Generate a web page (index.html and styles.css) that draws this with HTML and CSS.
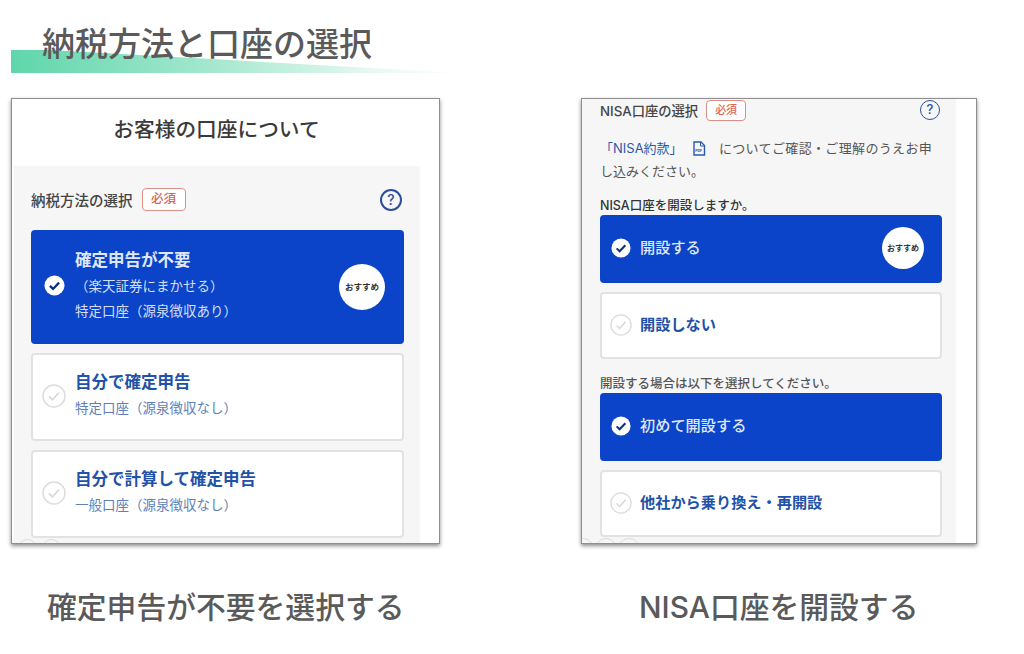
FILE: index.html
```html
<!DOCTYPE html>
<html lang="ja">
<head>
  <meta charset="UTF-8" />
  <meta name="viewport" content="width=device-width, initial-scale=1.0"/>
  <title>納税方法と口座の選択</title>
  <link rel="stylesheet" href="styles.css">
</head>
<body>
  <header class="slide-head">
    <div class="slide-band"></div>
    <h1>納税方法と口座の選択</h1>
  </header>

  <div class="panels">
    <div class="shot shot-left">
      <h2>お客様の口座について</h2>
      <div class="section">
        <div class="section-head">
          <span class="section-title">納税方法の選択</span>
          <span class="required">必須</span>
          <span class="help">?</span>
        </div>

        <div class="card card-on card-tax-main">
          <svg class="check check-on" viewBox="0 0 22 22"><circle cx="11" cy="11" r="10.5" fill="#fff"/><path d="M6.2 11.4l3.300 3.200 6.300-6.600" fill="none" stroke="#0b2f86" stroke-width="2.400"/></svg>
          <div class="card-text">
            <div class="card-title">確定申告が不要</div>
            <div class="card-sub card-sub-indent">（楽天証券にまかせる）</div>
            <div class="card-sub">特定口座（源泉徴収あり）</div>
          </div>
          <span class="recommend">おすすめ</span>
        </div>

        <div class="card card-tax">
          <svg class="check" viewBox="0 0 24 24"><circle cx="12" cy="12" r="11" fill="#fff" stroke="#dcdcdc" stroke-width="1.500"/><path d="M7 12.400l3.400 3.400 6.800-7.400" fill="none" stroke="#d6d6d6" stroke-width="1.500"/></svg>
          <div class="card-text">
            <div class="card-title">自分で確定申告</div>
            <div class="card-sub">特定口座（源泉徴収なし）</div>
          </div>
        </div>

        <div class="card card-tax">
          <svg class="check" viewBox="0 0 24 24"><circle cx="12" cy="12" r="11" fill="#fff" stroke="#dcdcdc" stroke-width="1.500"/><path d="M7 12.400l3.400 3.400 6.800-7.400" fill="none" stroke="#d6d6d6" stroke-width="1.500"/></svg>
          <div class="card-text">
            <div class="card-title">自分で計算して確定申告</div>
            <div class="card-sub">一般口座（源泉徴収なし）</div>
          </div>
        </div>

        <div class="peek">
          <span></span><span></span>
        </div>
      </div>
    </div>

    <div class="shot shot-right">
      <div class="section">
        <div class="section-head">
          <span class="section-title">NISA口座の選択</span>
          <span class="required">必須</span>
          <span class="help">?</span>
        </div>
        <div class="note">
          <div class="note-line">
            <a class="note-link">「NISA約款」</a>
            <svg class="pdf" viewBox="0 0 14 15"><path d="M2 1h7l3.500 3.500V14H2z" fill="none" stroke="#2a5aa8" stroke-width="1.400"/><path d="M8.500 1v4h4" fill="none" stroke="#2a5aa8" stroke-width="1"/><text x="3.300" y="11" class="pdf-label">PDF</text></svg>
            <span class="note-rest">についてご確認・ご理解のうえお申</span>
          </div>
          <div class="note-line">し込みください。</div>
        </div>

        <div class="question">NISA口座を開設しますか。</div>
        <div class="card card-on card-nisa">
          <svg class="check-small check-on" viewBox="0 0 22 22"><circle cx="11" cy="11" r="10.500" fill="#fff"/><path d="M6.200 11.400l3.300 3.200 6.300-6.600" fill="none" stroke="#0b2f86" stroke-width="2.200"/></svg>
          <div class="card-title">開設する</div>
          <span class="recommend recommend-small">おすすめ</span>
        </div>
        <div class="card card-nisa">
          <svg class="check-small" viewBox="0 0 24 24"><circle cx="12" cy="12" r="11" fill="#fff" stroke="#dcdcdc" stroke-width="1.500"/><path d="M7 12.400l3.400 3.400 6.800-7.400" fill="none" stroke="#d6d6d6" stroke-width="1.500"/></svg>
          <div class="card-title">開設しない</div>
        </div>

        <div class="question question-second">開設する場合は以下を選択してください。</div>
        <div class="card card-on card-nisa">
          <svg class="check-small check-on" viewBox="0 0 22 22"><circle cx="11" cy="11" r="10.500" fill="#fff"/><path d="M6.200 11.400l3.300 3.200 6.300-6.600" fill="none" stroke="#0b2f86" stroke-width="2.200"/></svg>
          <div class="card-title">初めて開設する</div>
        </div>
        <div class="card card-nisa">
          <svg class="check-small" viewBox="0 0 24 24"><circle cx="12" cy="12" r="11" fill="#fff" stroke="#dcdcdc" stroke-width="1.500"/><path d="M7 12.400l3.400 3.400 6.800-7.400" fill="none" stroke="#d6d6d6" stroke-width="1.500"/></svg>
          <div class="card-title">他社から乗り換え・再開設</div>
        </div>

        <div class="peek">
          <span></span><span></span><span></span>
        </div>
      </div>
    </div>
  </div>

  <div class="captions">
    <div class="caption caption-left">確定申告が不要を選択する</div>
    <div class="caption caption-right">NISA口座を開設する</div>
  </div>
</body>
</html>
```

FILE: styles.css
```css
* {
  box-sizing: border-box;
}

body {
  font-family: Inter, "Noto Sans CJK JP", sans-serif;
  background: #fff;
  margin: 0;
  width: 1024px;
  height: 654px;
  overflow: hidden;
}

/* slide title with the green swoosh behind it */
.slide-head {
  position: relative;
  height: 98px;
  padding: 21px 0 0 42px;
}

.slide-head h1 {
  position: relative;
  margin: 0;
  font-size: 33px;
  line-height: 46px;
  font-weight: 500;
  color: #5a5a5a;
}

.slide-band {
  position: absolute;
  left: 11px;
  top: 50px;
  width: 450px;
  height: 23px;
  background: linear-gradient(90deg, #5fd6ab 0%, #a5e8cf 45%, #e6f8f1 80%, #fff 100%);
  clip-path: polygon(0 0, 38px 0, 100% 100%, 0 100%);
}

.panels {
  display: flex;
  gap: 141px;
  padding-left: 11px;
}

.shot {
  height: 446px;
  background: #fff;
  overflow: hidden;
  border: 1px solid #8e8e8e;
  box-shadow: 0 2px 4px rgba(0, 0, 0, 0.45);
}

.shot-left {
  width: 429px;
}

.shot-right {
  width: 396px;
}

.shot h2 {
  margin: 0;
  width: 409px;
  height: 67px;
  padding-top: 16px;
  text-align: center;
  font-size: 20.700px;
  line-height: 30px;
  font-weight: 500;
  color: #3a3a3a;
}

.section {
  background: #f6f6f7;
  height: 100%;
}

.shot-left .section {
  width: 406px;
  margin-left: 2px;
  padding: 20px 16px 0 17px;
}

.shot-right .section {
  width: 374px;
  padding: 0 14px 0 18px;
}

.section-head {
  display: flex;
  align-items: center;
  height: 28px;
  margin-bottom: 16px;
}

.shot-right .section-head {
  height: 22px;
  margin-bottom: 0;
}

.section-title {
  font-size: 14.500px;
  font-weight: 500;
  color: #444;
  margin-bottom: 2px;
}

.shot-right .section-title {
  font-size: 13.300px;
  margin-bottom: 0;
}

.required {
  margin-left: 9px;
  margin-bottom: 1px;
  width: 44px;
  height: 23px;
  border: 1px solid #dc8f86;
  border-radius: 4px;
  background: #fff;
  color: #d9665a;
  font-size: 12.500px;
  font-weight: 500;
  line-height: 20px;
  text-align: center;
}

.shot-right .required {
  width: 40px;
  height: 21px;
  margin-left: 8px;
  margin-bottom: 0;
  line-height: 18px;
  font-size: 11px;
}

.help {
  margin-left: auto;
  margin-right: 2px;
  width: 22px;
  height: 22px;
  border: 2px solid #2b4f9e;
  border-radius: 50%;
  color: #2b4f9e;
  font-size: 14px;
  font-weight: 500;
  line-height: 18px;
  text-align: center;
}

.shot-right .help {
  width: 20px;
  height: 20px;
  border-width: 1.500px;
  line-height: 17px;
  margin-right: 2px;
  font-size: 13px;
}

.card {
  display: flex;
  align-items: center;
  background: #fff;
  border: 2px solid #e2e2e2;
  border-radius: 4px;
  color: #2152a8;
}

.card-on {
  background: #0b44c8;
  border-color: #0b44c8;
  color: #dfe7f8;
}

.card-tax-main {
  height: 114px;
  margin-bottom: 9px;
  padding: 0 17px 0 11px;
}

.card-tax {
  height: 88px;
  margin-bottom: 9px;
  padding: 0 0 3px 9px;
}

.card-nisa {
  height: 67px;
  margin-bottom: 9px;
  padding: 0 16px 2px 8px;
}

.card-nisa.card-on {
  height: 68px;
}

.check {
  width: 24px;
  height: 24px;
  flex: none;
  margin-right: 9px;
}

.check.check-on {
  width: 21px;
  height: 21px;
  margin-right: 10px;
  margin-bottom: 4px;
}

.check-small {
  width: 22px;
  height: 22px;
  flex: none;
  margin-right: 8px;
}

.check-small.check-on {
  width: 20px;
  height: 20px;
  margin-left: 1px;
  margin-right: 9px;
}

.card-tax-main .card-text {
  margin-bottom: 2px;
}

.card-title {
  font-size: 16.500px;
  line-height: 24px;
  font-weight: 700;
}

.card-nisa .card-title {
  font-size: 15.200px;
}

.card-on.card-nisa .card-title {
  font-weight: 500;
}

.card-sub {
  font-size: 13.500px;
  line-height: 25px;
  color: #5f7fb9;
}

.card-tax .card-sub {
  margin-top: 2px;
}

.card-on .card-sub {
  color: #d5dff5;
}

.card-sub-indent {
  margin-top: 2px;
}

.recommend {
  margin-left: auto;
  width: 46px;
  height: 46px;
  border-radius: 50%;
  background: #fff;
  color: #333;
  font-size: 8.500px;
  font-weight: 700;
  line-height: 46px;
  text-align: center;
}

.recommend-small {
  width: 42px;
  height: 42px;
  font-size: 8px;
  line-height: 42px;
}

.note {
  margin: 16px 0 0;
  font-size: 13px;
  line-height: 23px;
  color: #555;
}

.note-link {
  color: #2a5aa8;
}

.note-rest {
  letter-spacing: 0.35px;
  margin-left: 9px;
}

.pdf {
  width: 14px;
  height: 15px;
  vertical-align: -3px;
  margin-left: 6px;
}

.pdf-label {
  font-size: 3.500px;
  font-weight: 700;
  fill: #2a5aa8;
}

.question {
  margin-top: 14px;
  font-size: 12.500px;
  line-height: 17px;
  font-weight: 500;
  color: #333;
  margin-bottom: 1px;
}

.question-second {
  margin-top: 16px;
  color: #555;
}

/* tops of the next row of icons, cut off by the edge of the shot */
.peek {
  display: flex;
  margin: -8px 0 0 -13px;
  gap: 5px;
}

.shot-right .peek {
  margin-left: -28px;
  gap: 1px;
}

.peek span {
  width: 19px;
  height: 19px;
  flex: none;
  border: 1px solid #dcdcdc;
  border-radius: 50%;
}

.shot-right .peek span {
  width: 22px;
  height: 22px;
}

.captions {
  display: flex;
  padding: 42px 0 0 47px;
}

.caption {
  font-size: 29.800px;
  line-height: 42px;
  font-weight: 500;
  color: #5a5a5a;
}

.caption-left {
  width: 592px;
}
```
